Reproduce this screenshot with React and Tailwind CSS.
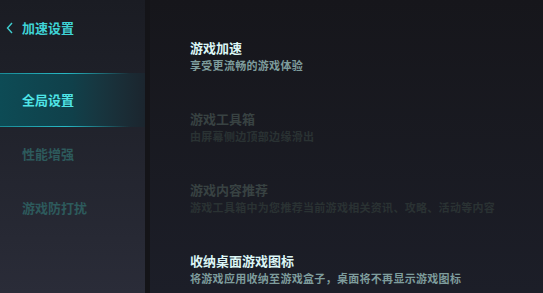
import React from 'react';

const font = { fontFamily: '"Noto Sans CJK SC", "Noto Sans", sans-serif' };

const menu = [
  { label: '全局设置', active: true },
  { label: '性能增强' },
  { label: '游戏防打扰' },
];

const options = [
  { title: '游戏加速', desc: '享受更流畅的游戏体验', on: true },
  { title: '游戏工具箱', desc: '由屏幕侧边顶部边缘滑出' },
  { title: '游戏内容推荐', desc: '游戏工具箱中为您推荐当前游戏相关资讯、攻略、活动等内容' },
  { title: '收纳桌面游戏图标', desc: '将游戏应用收纳至游戏盒子，桌面将不再显示游戏图标', on: true },
];

export default function App() {
  return (
    <div className="flex w-[543px] h-[293px] overflow-hidden bg-[#16161b]" style={font}>
      {/* Sidebar */}
      <div className="w-[145px] shrink-0 flex flex-col bg-gradient-to-b from-[#1a1c23] to-[#2a2c38]">
        <div className="h-[73px] flex items-start pt-[19px] pl-[5px] gap-[7px]">
          <svg width="10" height="14" viewBox="0 0 10 14" className="mt-[2px]">
            <path d="M7 2 L2.5 7 L7 12" fill="none" stroke="#3fcfd0" strokeWidth="1.4" />
          </svg>
          <span className="text-[13px] font-bold leading-[18px] text-[#3fd3d6]">加速设置</span>
        </div>
        {menu.map((m) =>
          m.active ? (
            <div
              key={m.label}
              className="relative h-[54px] flex items-center pl-[22px] bg-gradient-to-r from-[#0d4b55] via-[#10404a] to-[#1b252e]"
            >
              <div className="absolute top-0 left-0 right-[15px] h-px bg-gradient-to-r from-[#1a8a96] via-[#27b8c4] to-transparent" />
              <div className="absolute bottom-0 left-0 right-[15px] h-px bg-gradient-to-r from-[#1a8a96] via-[#27b8c4] to-transparent" />
              <span className="text-[13px] font-bold text-[#4fe4e6]">{m.label}</span>
            </div>
          ) : (
            <div key={m.label} className="h-[54px] flex items-center pl-[22px]">
              <span className="text-[13px] font-bold text-[#2d5a5c]">{m.label}</span>
            </div>
          )
        )}
      </div>
      <div className="w-[5px] shrink-0 bg-[#141418]" />
      {/* Content */}
      <div className="flex-1 flex flex-col pl-[40px] pt-[38px] gap-[35px] bg-gradient-to-b from-[#16161b] to-[#1c1e28]">
        {options.map((o) => (
          <div key={o.title} className="flex flex-col">
            <span className={`text-[13px] font-bold leading-[19px] ${o.on ? 'text-[#dcf6f6]' : 'text-[#384242]'}`}>
              {o.title}
            </span>
            <span className={`text-[11px] font-bold leading-[17px] tracking-[0.3px] whitespace-nowrap ${o.on ? 'text-[#7e9c9c]' : 'text-[#2a3233]'}`}>
              {o.desc}
            </span>
          </div>
        ))}
      </div>
    </div>
  );
}
